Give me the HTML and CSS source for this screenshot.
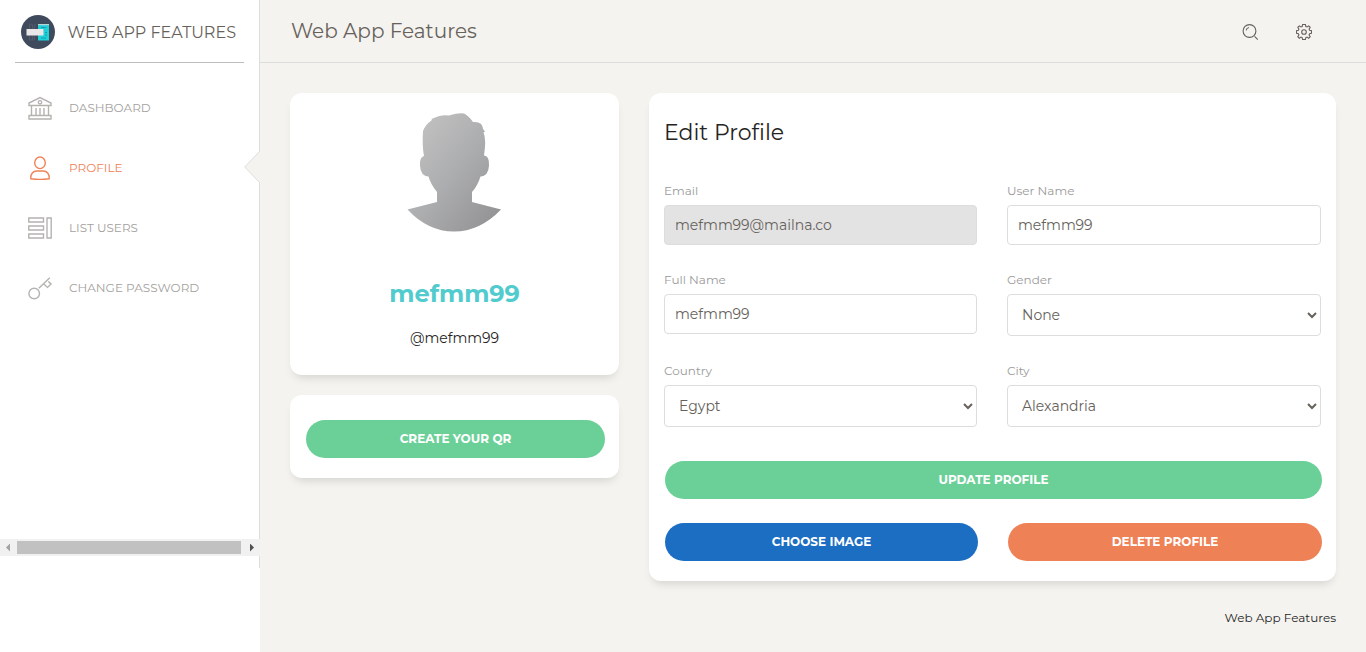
FILE: index.html
```
<!DOCTYPE html>
<html lang="en">
<head>
<meta charset="utf-8">
<title>Web App Features</title>
<link rel="stylesheet" href="styles.css">
</head>
<body>
<div class="app">
  <aside class="sidebar">
    <div class="sidebar-inner">
      <a class="brand">
        <svg class="brand-logo" width="34" height="34" viewBox="0 0 34 34">
          <circle cx="17" cy="17" r="17" fill="#3f4b5c"/>
          <path d="M8.500 25V10.500q0-1.500 1.500-1.500t1.500 1.500V25zM13.500 25V11q0-2 2-2" fill="none" stroke="#4f5a6a" stroke-width="1.200"/>
          <path d="M17 9h11v16.500H17z" fill="#1fd0d8"/>
          <path d="M17 9h11v1.200H17z" fill="#b9d5da"/>
          <path d="M20 12.500h5M20 15h3M24 17.500h2M24 20h2M20 23h5" stroke="#158f9f" stroke-width=".8"/>
          <path d="M5.500 14h17v6.500h-17z" fill="#e9e7e8"/>
        </svg>
        <span class="brand-name">WEB APP FEATURES</span>
      </a>
      <nav class="menu">
        <a class="menu-item">
          <svg class="menu-icon" viewBox="0 0 24 24"><path d="M1 9.500V7L12 1.500 23 7v2.500zM3.500 9.500V19M8 12v7M12 12v7M16 12v7M20.500 9.500V19M1 19.500h22v3.500H1z"/><circle cx="12" cy="6.300" r="1.700"/></svg>
          <span>DASHBOARD</span>
        </a>
        <a class="menu-item active">
          <svg class="menu-icon" viewBox="0 0 24 24"><ellipse cx="12" cy="6.800" rx="5.300" ry="5.800"/><path d="M2.800 22.700c-.4-5 2.400-7.700 6.200-7.700h6c3.800 0 6.600 2.700 6.200 7.700-5.600 1-12.800 1-18.400 0z"/></svg>
          <span>PROFILE</span>
        </a>
        <a class="menu-item">
          <svg class="menu-icon" viewBox="0 0 24 24"><path d="M.8 2h14.700v4H.8zM.8 10h14.700v4H.8zM.8 18h14.700v4H.8zM19 2h4.200v20H19z"/></svg>
          <span>LIST USERS</span>
        </a>
        <a class="menu-item">
          <svg class="menu-icon" viewBox="0 0 24 24"><circle cx="6.200" cy="17.500" r="5.300"/><path d="M10.800 12.200L21.800 1.700M15.500 7.700l4 3.700L23 7.900l-2.700-2.500"/></svg>
          <span>CHANGE PASSWORD</span>
        </a>
      </nav>
    </div>
    <div class="scrollbar">
      <span class="scroll-arrow left"></span>
      <span class="scroll-thumb"></span>
      <span class="scroll-arrow right"></span>
    </div>
    <div class="sidebar-tail"></div>
    <svg class="pointer" width="16" height="32" viewBox="0 0 16 32"><path d="M16 0L.7 16 16 32z" fill="#f4f3ef"/><path d="M15.500.5L.7 16l14.800 15.500" fill="none" stroke="#ddd"/></svg>
  </aside>
  <main class="main">
    <header class="topbar">
      <span class="page-title">Web App Features</span>
      <div class="tools">
        <svg width="16" height="16" viewBox="0 0 16 16"><circle cx="7.500" cy="7" r="6.400"/><path d="M12.600 12.300l3.200 3.200M4.100 6.400c.3-1.500 1.200-2.500 2.800-2.900"/></svg>
        <svg width="16" height="16" viewBox="0 0 16 16"><path d="M6.600.5h2.800l.4 2 1.200.5 1.700-1.100 1.500 1.500L13.100 5l.5 1.200 1.900.4v2.800l-1.900.4-.5 1.200 1.100 1.700-1.500 1.500-1.700-1.100-1.200.5-.4 1.900H6.600l-.4-1.900-1.200-.5-1.700 1.100-1.500-1.500L2.900 11l-.5-1.200-1.900-.4V6.600l1.900-.4L2.900 5 1.800 3.400l1.500-1.500L5 3l1.200-.5z"/><circle cx="8" cy="8" r="2.300"/></svg>
      </div>
    </header>
    <div class="content">
      <div class="side-col">
        <section class="card profile-card">
          <svg class="avatar" width="94" height="120" viewBox="0 0 94 120">
            <defs><linearGradient id="shade" x1="0" y1="0" x2="1" y2="1"><stop offset="0" stop-color="#c6c6c6"/><stop offset=".5" stop-color="#acadae"/><stop offset="1" stop-color="#8e8e90"/></linearGradient></defs>
            <path fill="url(#shade)" d="M.5 98.500L30 91V81Q23.500 73 21.500 65.500Q13.500 65 13 54.500Q12.500 46 17 45Q15 35 16 20Q18 14 25 9L24.500 8Q34 3 42 4.500Q52 1.500 57 2.500Q62 5 66 11Q75.500 10 76 18L78 20.500L76.500 21.500Q79.500 28 77 44.500Q82.500 45 82 54.500Q81.500 65 73.500 65.500Q70.500 75 65 81V91L94 98.500Q73 120.500 47 120.500T.5 98.500z"/>
          </svg>
          <h2 class="user-name">mefmm99</h2>
          <p class="user-handle">@mefmm99</p>
        </section>
        <section class="card qr-card"><button class="btn green">CREATE YOUR QR</button></section>
      </div>
      <section class="card edit-card">
        <h1 class="edit-title">Edit Profile</h1>
        <form class="form">
          <label class="field"><span class="label">Email</span><input class="control" value="mefmm99@mailna.co" disabled></label>
          <label class="field"><span class="label">User Name</span><input class="control" value="mefmm99"></label>
          <label class="field"><span class="label">Full Name</span><input class="control" value="mefmm99"></label>
          <label class="field"><span class="label">Gender</span><select class="control select"><option>None</option></select></label>
          <label class="field"><span class="label">Country</span><select class="control select"><option>Egypt</option></select></label>
          <label class="field"><span class="label">City</span><select class="control select"><option>Alexandria</option></select></label>
        </form>
        <div class="actions">
          <button type="button" class="btn green wide">UPDATE PROFILE</button>
          <button type="button" class="btn blue">CHOOSE IMAGE</button>
          <button type="button" class="btn orange">DELETE PROFILE</button>
        </div>
      </section>
    </div>
    <footer class="footer">Web App Features</footer>
  </main>
</div>
</body>
</html>
```
FILE: styles.css
```
* { box-sizing: border-box; }
body {
  margin: 0;
  background: #f4f3ef;
  font-family: Montserrat, Inter, sans-serif;
  font-size: 14px;
  font-weight: 400;
  color: #252422;
}
h1, h2, p { margin: 0; }
.app { display: flex; height: 652px; overflow: hidden; }

/* Sidebar */
.sidebar { position: relative; flex: none; width: 260px; background: #fff; }
.sidebar-inner { height: 539px; padding: 0 15px; border-right: 1px solid #ddd; }
.brand {
  display: flex;
  align-items: center;
  height: 63px;
  padding: 1px 0 0 6px;
  border-bottom: 1px solid #bdbdbd;
}
.brand-logo { flex: none; }
.brand-name {
  margin: 2px 0 0 12.5px;
  font-size: 16px;
  line-height: 20px;
  color: #66615b;
  white-space: nowrap;
}
.menu { display: flex; flex-direction: column; padding-top: 15px; }
.menu-item {
  display: flex;
  align-items: center;
  gap: 17px;
  height: 60px;
  padding-left: 13px;
  font-size: 12px;
  color: #a3a19d;
  white-space: nowrap;
}
.menu-item.active { color: #ef8157; }
.menu-item span { margin-top: -2px; }
.menu-icon { width: 24px; height: 24px; fill: none; stroke: #b5b3b0; stroke-width: 1.4; }
.active .menu-icon { stroke: currentColor; }
.scrollbar { display: flex; align-items: center; height: 17px; background: #f1f1f1; }
.scroll-arrow { width: 4px; height: 8px; }
.scroll-arrow.left { margin: 0 7px 0 6px; background: #a3a3a3; clip-path: polygon(100% 0, 100% 100%, 0 50%); }
.scroll-thumb { width: 224px; height: 13px; background: #c1c1c1; }
.scroll-arrow.right { margin-left: 9px; background: #505050; clip-path: polygon(0 0, 100% 50%, 0 100%); }
.sidebar-tail { height: 12px; border-right: 1px solid #ddd; }
.pointer { position: absolute; top: 151px; right: 0; }

/* Top bar */
.main { flex: 1; min-width: 0; }
.topbar {
  display: flex;
  align-items: center;
  justify-content: space-between;
  height: 63px;
  padding: 0 54px 0 31px;
  border-bottom: 1px solid #ddd;
}
.page-title { font-size: 20px; line-height: 24px; color: #66615b; }
.tools { display: flex; gap: 38px; padding-top: 2px; }
.tools svg { fill: none; stroke: #66615b; stroke-width: 1.1; }

/* Cards */
.content {
  display: grid;
  grid-template-columns: 329px 687px;
  align-items: start;
  gap: 30px;
  padding: 30px 30px 0;
}
.side-col { display: flex; flex-direction: column; gap: 20px; }
.card { background: #fff; border-radius: 12px; box-shadow: 0 6px 10px -4px rgba(0, 0, 0, .15); }
.profile-card { display: flex; flex-direction: column; align-items: center; height: 282px; padding-top: 18px; }
.avatar { margin-right: 1px; overflow: visible; }
.user-name { margin-top: 48px; font-size: 24px; line-height: 30px; font-weight: 700; color: #51cbce; }
.user-handle { margin-top: 19px; line-height: 20px; }
.qr-card { display: grid; height: 83px; padding: 25px 14px 0 16px; }

/* Form */
.edit-card { height: 488px; padding: 25px 14px 0 15px; }
.edit-title { font-size: 22px; line-height: 30px; font-weight: 400; }
.form { display: grid; grid-template-columns: 313px 314px; column-gap: 30px; padding-top: 32px; }
.field { display: block; }
.field:nth-child(-n+2) { height: 89px; }
.field:nth-child(3), .field:nth-child(4) { height: 91px; }
.field:nth-child(n+5) { height: 76px; }
.label { display: block; height: 25px; padding-top: 1px; font-size: 12px; line-height: 20px; color: #9a9a9a; }
.control {
  display: block;
  width: 100%;
  height: 40px;
  padding: 0 10px;
  border: 1px solid #ddd;
  border-radius: 4px;
  background: #fff;
  color: #66615b;
  font-family: inherit;
  font-size: 14px;
}
.control:disabled { background: #e3e3e3; opacity: 1; }
.select { height: 42px; }

/* Buttons */
.actions { display: grid; grid-template-columns: 313px 314px; gap: 24px 30px; padding: 25px 0 0 1px; width: 658px; }
.btn {
  height: 38px;
  padding: 0 0 1px;
  border: 0;
  border-radius: 19px;
  color: #fff;
  font-family: inherit;
  font-size: 12px;
  font-weight: 700;
}
.green { background: #6bd098; }
.blue { background: #1b6ec2; }
.orange { background: #ef8157; }
.wide { grid-column: 1 / -1; }
.footer { padding: 27px 30px 0 0; text-align: right; font-size: 12px; line-height: 20px; }
```
